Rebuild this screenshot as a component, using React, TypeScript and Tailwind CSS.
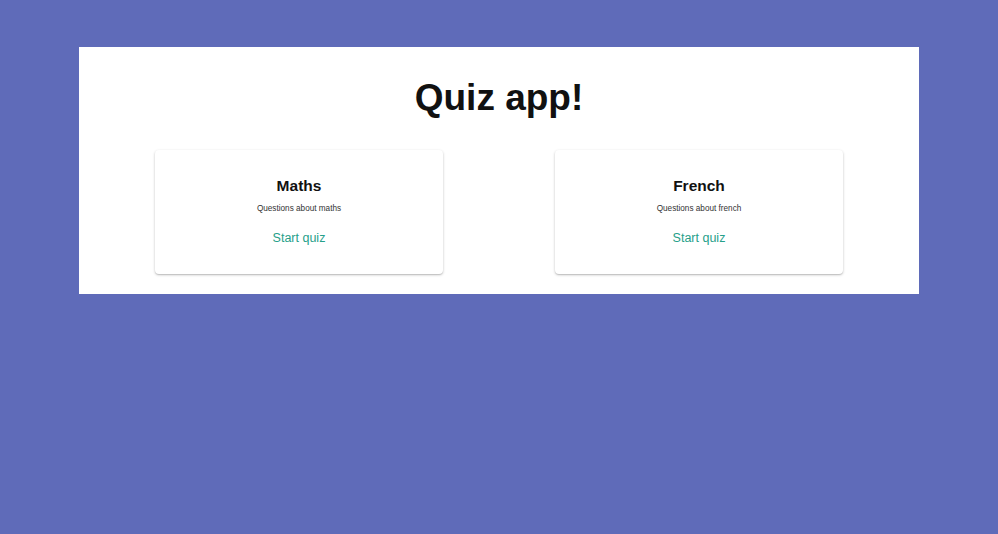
const quizzes = [
  { name: "Maths", description: "Questions about maths" },
  { name: "French", description: "Questions about french" },
];

const App = () => {
  return (
    <div className="min-h-[534px] w-full bg-[#5f6bb9] pt-[47px] font-['Liberation_Sans',Arial,sans-serif]">
      <main className="mx-auto flex w-[840px] flex-col items-center bg-white pt-[27px] pb-[20px]">
        <h1 className="text-[37px] leading-[48px] font-bold text-[#111]">
          Quiz app!
        </h1>
        <div className="mt-[28px] flex w-full justify-between px-[76px]">
          {quizzes.map((quiz) => (
            <div
              key={quiz.name}
              className="flex h-[124px] w-[288px] flex-col items-center rounded-[4px] bg-white pt-[26px] shadow-[0_1px_3px_rgba(0,0,0,0.2),0_1px_1px_rgba(0,0,0,0.12)]"
            >
              <h2 className="text-[15.5px] leading-[20px] font-bold text-[#111]">
                {quiz.name}
              </h2>
              <p className="mt-[8px] text-[8.2px] leading-[10px] text-[#333]">
                {quiz.description}
              </p>
              <a
                href="#"
                className="mt-[16px] text-[12.5px] leading-[16px] text-[#26a08a]"
              >
                Start quiz
              </a>
            </div>
          ))}
        </div>
      </main>
    </div>
  );
};

export default App;
